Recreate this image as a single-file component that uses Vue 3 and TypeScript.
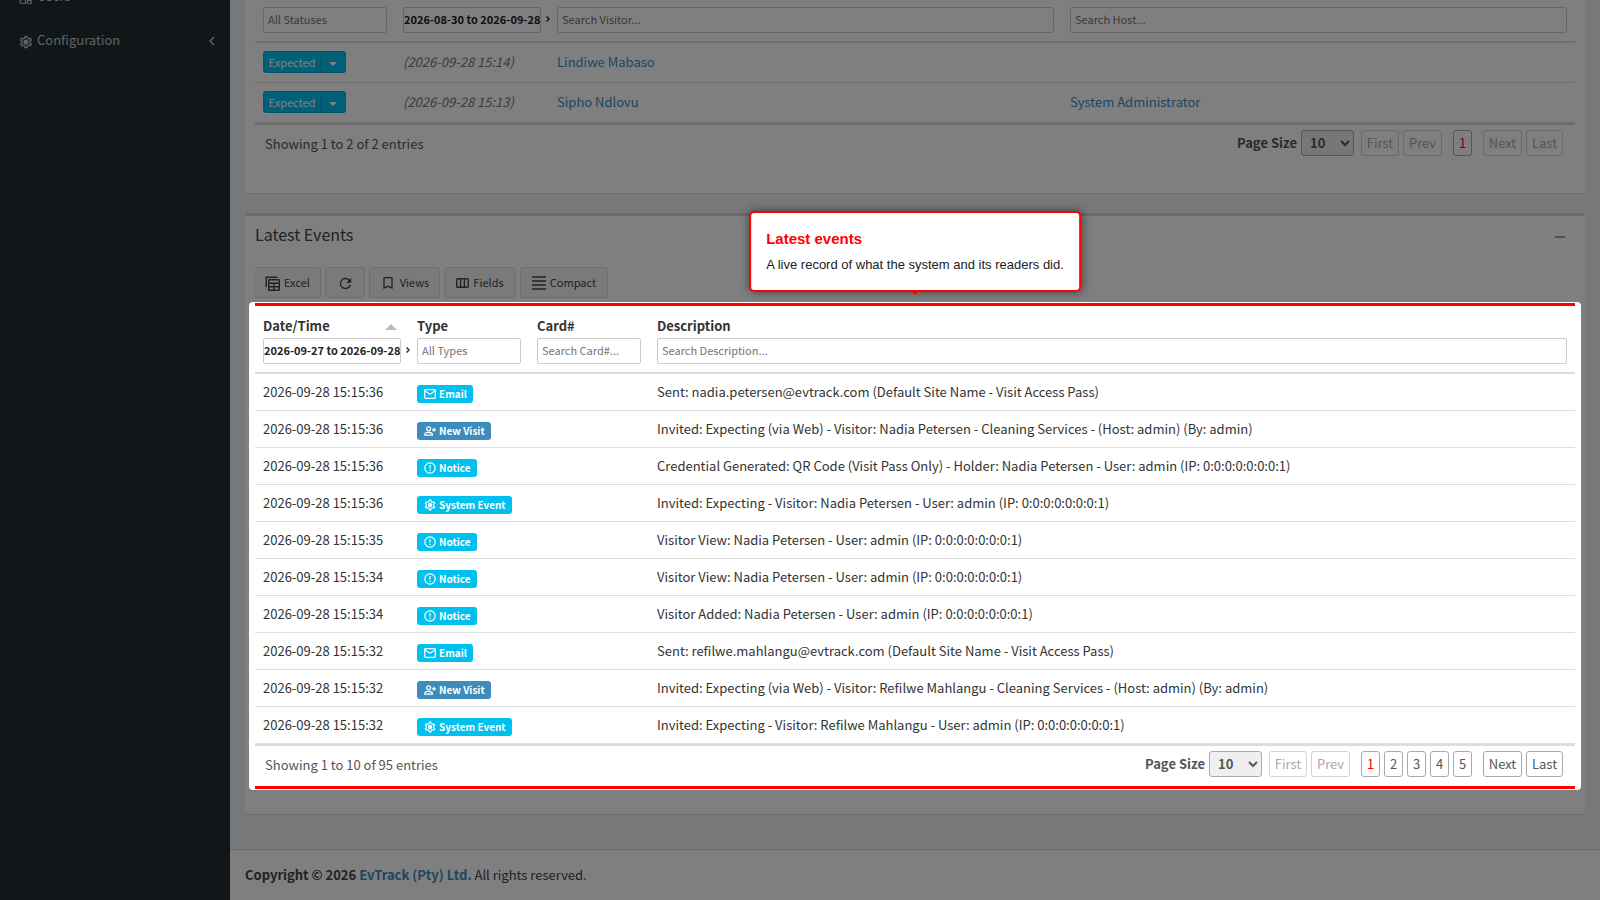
<script setup lang="ts">
type EventKind = 'email' | 'visit' | 'notice' | 'system'

interface LogEvent {
  time: string
  kind: EventKind
  text: string
}

const kindLabel: Record<EventKind, string> = {
  email: 'Email',
  visit: 'New Visit',
  notice: 'Notice',
  system: 'System Event',
}

const visits = [
  { status: 'Expected', date: '(2026-09-28 15:14)', visitor: 'Lindiwe Mabaso', host: '' },
  { status: 'Expected', date: '(2026-09-28 15:13)', visitor: 'Sipho Ndlovu', host: 'System Administrator' },
]

const events: LogEvent[] = [
  { time: '2026-09-28 15:15:36', kind: 'email', text: 'Sent: nadia.petersen@evtrack.com (Default Site Name - Visit Access Pass)' },
  { time: '2026-09-28 15:15:36', kind: 'visit', text: 'Invited: Expecting (via Web) - Visitor: Nadia Petersen - Cleaning Services - (Host: admin) (By: admin)' },
  { time: '2026-09-28 15:15:36', kind: 'notice', text: 'Credential Generated: QR Code (Visit Pass Only) - Holder: Nadia Petersen - User: admin (IP: 0:0:0:0:0:0:0:1)' },
  { time: '2026-09-28 15:15:36', kind: 'system', text: 'Invited: Expecting - Visitor: Nadia Petersen - User: admin (IP: 0:0:0:0:0:0:0:1)' },
  { time: '2026-09-28 15:15:35', kind: 'notice', text: 'Visitor View: Nadia Petersen - User: admin (IP: 0:0:0:0:0:0:0:1)' },
  { time: '2026-09-28 15:15:34', kind: 'notice', text: 'Visitor View: Nadia Petersen - User: admin (IP: 0:0:0:0:0:0:0:1)' },
  { time: '2026-09-28 15:15:34', kind: 'notice', text: 'Visitor Added: Nadia Petersen - User: admin (IP: 0:0:0:0:0:0:0:1)' },
  { time: '2026-09-28 15:15:32', kind: 'email', text: 'Sent: refilwe.mahlangu@evtrack.com (Default Site Name - Visit Access Pass)' },
  { time: '2026-09-28 15:15:32', kind: 'visit', text: 'Invited: Expecting (via Web) - Visitor: Refilwe Mahlangu - Cleaning Services - (Host: admin) (By: admin)' },
  { time: '2026-09-28 15:15:32', kind: 'system', text: 'Invited: Expecting - Visitor: Refilwe Mahlangu - User: admin (IP: 0:0:0:0:0:0:0:1)' },
]

const cog =
  'M12,8A4,4 0 0,1 16,12A4,4 0 0,1 12,16A4,4 0 0,1 8,12A4,4 0 0,1 12,8M10,22C9.75,22 9.54,21.82 9.5,21.58L9.13,18.93C8.5,18.68 7.96,18.34 7.44,17.94L4.95,18.95C4.73,19.03 4.46,18.95 4.34,18.73L2.34,15.27C2.21,15.05 2.27,14.78 2.46,14.63L4.57,12.97L4.5,12L4.57,11L2.46,9.37C2.27,9.22 2.21,8.95 2.34,8.73L4.34,5.27C4.46,5.05 4.73,4.96 4.95,5.05L7.44,6.05C7.96,5.66 8.5,5.32 9.13,5.07L9.5,2.42C9.54,2.18 9.75,2 10,2H14C14.25,2 14.46,2.18 14.5,2.42L14.87,5.07C15.5,5.32 16.04,5.66 16.56,6.05L19.05,5.05C19.27,4.96 19.54,5.05 19.66,5.27L21.66,8.73C21.79,8.95 21.73,9.22 21.54,9.37L19.43,11L19.5,12L19.43,13L21.54,14.63C21.73,14.78 21.79,15.05 21.66,15.27L19.66,18.73C19.54,18.95 19.27,19.04 19.05,18.95L16.56,17.95C16.04,18.34 15.5,18.68 14.87,18.93L14.5,21.58C14.46,21.82 14.25,22 14,22H10M11.25,4L10.88,6.61C9.68,6.86 8.62,7.5 7.85,8.39L5.44,7.35L4.69,8.65L6.8,10.2C6.4,11.37 6.4,12.64 6.8,13.8L4.68,15.36L5.43,16.66L7.86,15.62C8.63,16.5 9.68,17.14 10.87,17.38L11.24,20H12.76L13.13,17.39C14.32,17.14 15.37,16.5 16.14,15.62L18.57,16.66L19.32,15.36L17.2,13.81C17.6,12.64 17.6,11.37 17.2,10.2L19.31,8.65L18.56,7.35L16.15,8.39C15.38,7.5 14.32,6.86 13.12,6.62L12.75,4H11.25Z'
</script>

<template>
  <div class="page">
    <aside class="sidebar">
      <nav>
        <a href="#users" class="nav-item">
          <svg viewBox="0 0 24 24" class="nav-icon" fill="none" stroke="currentColor" stroke-width="2">
            <circle cx="9" cy="7" r="4" />
            <path d="M2 21v-3c0-2 3-4 7-4h2v7H2M14 21v-5h7v5z" />
            <circle cx="17" cy="12" r="3" />
          </svg>
          <span class="nav-text">Users</span>
        </a>
        <a href="#configuration" class="nav-item">
          <svg viewBox="1 1 22 22" class="nav-icon" fill="currentColor"><path :d="cog" /></svg>
          <span class="nav-text">Configuration</span>
          <svg viewBox="0 0 6 10" class="chevron" fill="none" stroke="currentColor" stroke-width="1.5"><path d="M5 1 1 5l4 4" /></svg>
        </a>
      </nav>
    </aside>

    <div class="main">
      <main class="content">
        <section class="card card-visits">
          <table class="grid visits">
            <colgroup><col class="w-status" /><col class="w-date" /><col /><col /></colgroup>
            <thead>
              <tr>
                <th><input type="text" class="filter" placeholder="All Statuses" aria-label="Status" /></th>
                <th>
                  <div class="range">
                    <input type="text" class="filter filter-date" value="2026-08-30 to 2026-09-28" aria-label="Expected date" />
                    <svg viewBox="0 0 4 6" class="next" fill="none" stroke="currentColor" stroke-width="1.5"><path d="M.5.5 3 3 .5 5.5" /></svg>
                  </div>
                </th>
                <th><input type="text" class="filter" placeholder="Search Visitor..." aria-label="Visitor" /></th>
                <th><input type="text" class="filter" placeholder="Search Host..." aria-label="Host" /></th>
              </tr>
            </thead>
            <tbody>
              <tr v-for="v in visits" :key="v.visitor">
                <td>
                  <div class="split">
                    <button type="button" class="split-main">{{ v.status }}</button>
                    <button type="button" class="split-caret" aria-label="Change status"><span class="caret"></span></button>
                  </div>
                </td>
                <td class="pending">{{ v.date }}</td>
                <td><a href="#visitor">{{ v.visitor }}</a></td>
                <td><a v-if="v.host" href="#host">{{ v.host }}</a></td>
              </tr>
            </tbody>
          </table>
          <div class="pager">
            <span class="summary">Showing 1 to 2 of 2 entries</span>
            <label for="size-visits" class="size-label">Page Size</label>
            <select id="size-visits" class="size"><option>10</option></select>
            <button type="button" class="pg pg-first" disabled>First</button>
            <button type="button" class="pg pg-prev" disabled>Prev</button>
            <span class="pages"><button type="button" class="pg pg-num active">1</button></span>
            <button type="button" class="pg pg-next" disabled>Next</button>
            <button type="button" class="pg pg-last" disabled>Last</button>
          </div>
        </section>

        <section class="card card-events">
          <header class="card-head">
            <h3>Latest Events</h3>
            <button type="button" class="collapse" aria-label="Collapse"><span class="minus"></span></button>
          </header>

          <div class="toolbar">
            <button type="button" class="tool tool-excel">
              <svg viewBox="0 0 15 15" width="15" height="15" fill="none" stroke="currentColor" stroke-width="1.4">
                <path d="M1.2 11V1.2H12.5" />
                <rect x="3.7" y="3.7" width="10.6" height="10.6" rx=".6" />
                <path d="M3.7 7.2h10.600M3.7 10.800h10.600M9 7.200v7" />
              </svg>
              Excel
            </button>
            <button type="button" class="tool tool-refresh" aria-label="Refresh">
              <svg viewBox="0 0 24 24" width="17" height="17" fill="currentColor"><path d="M17.650 6.350A7.960 7.960 0 0 0 12 4a8 8 0 1 0 7.730 10h-2.080A6 6 0 1 1 12 6c1.660 0 3.140.690 4.220 1.780L13 11h7V4z" /></svg>
            </button>
            <button type="button" class="tool tool-views">
              <svg viewBox="0 0 24 24" width="16" height="16" fill="currentColor"><path d="M17 18l-5-2.180L7 18V5h10m0-2H7a2 2 0 0 0-2 2v16l7-3 7 3V5a2 2 0 0 0-2-2z" /></svg>
              Views
            </button>
            <button type="button" class="tool tool-fields">
              <svg viewBox="0 0 13 10" width="13" height="10" fill="none" stroke="currentColor" stroke-width="1.400"><rect x=".7" y=".7" width="11.600" height="8.600" rx="1" /><path d="M4.600 1v8M8.400 1v8" /></svg>
              Fields
            </button>
            <button type="button" class="tool tool-compact">
              <svg viewBox="0 0 14 14" width="14" height="14" fill="none" stroke="currentColor" stroke-width="1.300"><path d="M0 1h14M0 5h14M0 9h14M0 13h14" /></svg>
              Compact
            </button>
          </div>

          <div class="focus">
            <div class="spotlight"></div>
            <div class="tip" role="tooltip">
              <h4>Latest events</h4>
              <p>A live record of what the system and its readers did.</p>
            </div>

            <table class="grid events">
              <colgroup><col class="w-date" /><col class="w-type" /><col class="w-type" /><col /></colgroup>
              <thead>
                <tr>
                  <th>
                    <span class="th-label th-sort">Date/Time<span class="sort"></span></span>
                    <div class="range">
                      <input type="text" class="filter filter-date" value="2026-09-27 to 2026-09-28" aria-label="Date/Time" />
                      <svg viewBox="0 0 4 6" class="next" fill="none" stroke="currentColor" stroke-width="1.5"><path d="M.5.5 3 3 .5 5.5" /></svg>
                    </div>
                  </th>
                  <th><label for="f-type" class="th-label">Type</label><input id="f-type" type="text" class="filter" placeholder="All Types" /></th>
                  <th><label for="f-card" class="th-label">Card#</label><input id="f-card" type="text" class="filter" placeholder="Search Card#..." /></th>
                  <th><label for="f-desc" class="th-label">Description</label><input id="f-desc" type="text" class="filter" placeholder="Search Description..." /></th>
                </tr>
              </thead>
              <tbody>
                <tr v-for="(e, i) in events" :key="i">
                  <td>{{ e.time }}</td>
                  <td>
                    <span class="badge" :class="'badge-' + e.kind">
                      <svg v-if="e.kind === 'email'" viewBox="0 0 12 12" class="badge-icon" fill="none" stroke="currentColor" stroke-width="1.2"><rect x=".7" y="1.700" width="10.600" height="8.600" rx=".8" /><path d="M1 3l5 3.200L11 3" /></svg>
                      <svg v-else-if="e.kind === 'visit'" viewBox="0 0 12 12" class="badge-icon" fill="none" stroke="currentColor" stroke-width="1.2"><circle cx="4.600" cy="3.800" r="2" /><path d="M.8 10.200V9.400C.8 8 3 7.400 4.600 7.400S8.400 8 8.400 9.400v.8zM8 4.800h4M10 2.800v4" /></svg>
                      <svg v-else-if="e.kind === 'notice'" viewBox="0 0 12 12" class="badge-icon" fill="none" stroke="currentColor" stroke-width="1.2"><circle cx="6" cy="6" r="5.200" /><path d="M6 3v3.600M6 7.800V9" /></svg>
                      <svg v-else viewBox="1 1 22 22" class="badge-icon" fill="currentColor"><path :d="cog" /></svg>
                      {{ kindLabel[e.kind] }}
                    </span>
                  </td>
                  <td></td>
                  <td>{{ e.text }}</td>
                </tr>
              </tbody>
            </table>
            <div class="pager">
              <span class="summary">Showing 1 to 10 of 95 entries</span>
              <label for="size-events" class="size-label">Page Size</label>
              <select id="size-events" class="size"><option>10</option></select>
              <button type="button" class="pg pg-first" disabled>First</button>
              <button type="button" class="pg pg-prev" disabled>Prev</button>
              <span class="pages">
                <button v-for="n in 5" :key="n" type="button" class="pg pg-num" :class="{ active: n === 1 }">{{ n }}</button>
              </span>
              <button type="button" class="pg pg-next">Next</button>
              <button type="button" class="pg pg-last">Last</button>
            </div>
          </div>
        </section>
      </main>

      <footer class="footer">
        <strong>Copyright © 2026 <a href="#evtrack">EvTrack (Pty) Ltd.</a></strong> All rights reserved.
      </footer>
    </div>
  </div>
</template>

<style>
body {
  margin: 0;
  background: #ecf0f5;
}
</style>

<style scoped>
.page {
  position: relative;
  display: flex;
  min-height: 100vh;
  overflow: hidden;
  background: #ecf0f5;
  color: #333;
  font-family: "Source Sans Pro", "Noto Sans CJK SC", "Noto Sans", sans-serif;
  font-size: 13px;
  line-height: 20px;
}
.page *,
.page *::before,
.page *::after {
  box-sizing: border-box;
}
button,
input,
select {
  font-family: inherit;
  margin: 0;
}
a {
  color: #3c8dbc;
  text-decoration: none;
}

.sidebar {
  flex: 0 0 230px;
  background: #222d32;
}
.sidebar nav {
  margin-top: -25px;
}
.nav-item {
  display: flex;
  align-items: center;
  height: 44px;
  padding: 0 15px 0 19px;
  color: #b8c7ce;
}
.nav-icon {
  width: 14px;
  height: 14px;
  margin: 2px 4px 0 0;
}
.nav-text {
  flex: 1;
  padding-bottom: 2px;
}
.chevron {
  width: 6px;
  height: 10px;
}

.main {
  flex: 1;
  min-width: 0;
  display: flex;
  flex-direction: column;
}
.content {
  flex: 1;
  padding: 0 15px;
}
.card {
  background: #fff;
  border-radius: 3px;
  box-shadow: 0 1px 1px rgba(0, 0, 0, 0.1);
  padding: 0 10px;
}
.card-visits {
  padding-top: 7px;
  padding-bottom: 32px;
  margin-bottom: 20px;
}
.card-events {
  border-top: 3px solid #d2d6de;
  padding-bottom: 25px;
  margin-bottom: 35px;
}
.card-head {
  display: flex;
  justify-content: space-between;
  align-items: center;
  height: 41px;
}
.card-head h3 {
  margin: 0;
  padding-bottom: 6px;
  font-size: 16px;
  font-weight: 400;
  color: #444;
}
.collapse {
  padding: 10px;
  border: 0;
  background: none;
}
.minus {
  display: block;
  width: 10px;
  height: 2px;
  background: #97a0b3;
}

.toolbar {
  display: flex;
  gap: 4px;
  padding: 10px 0 5px;
}
.tool {
  display: flex;
  align-items: center;
  justify-content: center;
  gap: 4px;
  height: 31px;
  padding: 0 0 1px;
  background: #f4f4f4;
  border: 1px solid #ddd;
  border-radius: 3px;
  color: #444;
  font-size: 11px;
}
.tool svg {
  margin-top: 2px;
}
.tool-excel {
  width: 66px;
  border-left: 0;
  border-radius: 0 3px 3px 0;
}
.tool-refresh {
  width: 40px;
}
.tool-views {
  width: 71px;
}
.tool-fields {
  width: 72px;
}
.tool-compact {
  width: 88px;
}

.focus {
  position: relative;
  border-top: 3px solid #f00;
  border-bottom: 3px solid #f00;
}
.spotlight {
  position: absolute;
  inset: -4px -6px;
  z-index: 5;
  border-radius: 4px;
  box-shadow: 0 0 0 3000px rgba(0, 0, 0, 0.5);
  pointer-events: none;
}
.tip {
  position: absolute;
  z-index: 6;
  left: 50%;
  bottom: calc(100% + 14px);
  transform: translateX(-50%);
  padding: 16px 15px 15px;
  background: #fff;
  border: 2px solid #f00;
  border-radius: 5px;
  box-shadow: 0 0 10px rgba(0, 0, 0, 0.5);
  color: #222;
  font-family: "Liberation Sans", Arial, sans-serif;
  font-size: 13px;
  white-space: nowrap;
}
.tip::after {
  content: "";
  position: absolute;
  left: 50%;
  top: 100%;
  margin: 1px 0 0 -4px;
  border: 4px solid transparent;
  border-top-color: #f00;
}
.tip h4 {
  margin: 0 0 6px;
  color: #f00;
  font-size: 15px;
  line-height: 20px;
}
.tip p {
  margin: 0;
  line-height: 20px;
}

.grid {
  width: 100%;
  border-collapse: separate;
  border-spacing: 0;
  table-layout: fixed;
}
.w-status {
  width: 140px;
}
.w-date {
  width: 154px;
}
.w-type {
  width: 120px;
}
.grid th {
  padding: 0 8px 8px;
  border-bottom: 2px solid #ddd;
  text-align: left;
  font-weight: 700;
}
.grid td {
  padding: 0 8px;
  border-bottom: 1px solid #ddd;
}
.visits td {
  height: 40px;
  padding-top: 8px;
  line-height: 22px;
  vertical-align: top;
}
.events td {
  height: 37px;
  white-space: nowrap;
}
.grid tbody tr:last-child td {
  border-bottom-width: 3px;
}
.visits tbody tr:last-child td {
  height: 42px;
}
.events tbody tr:last-child td {
  height: 39px;
}
.events thead th {
  padding-top: 10px;
}
.th-label {
  display: flex;
  align-items: center;
  height: 22px;
  padding-bottom: 2px;
}
.th-sort {
  justify-content: space-between;
  padding-right: 4px;
}
.sort {
  margin-top: 2px;
  border: 6px solid transparent;
  border-top: 0;
  border-bottom-color: #bbb;
}
.filter {
  display: block;
  width: 100%;
  height: 26px;
  padding: 0 4px 2px;
  border: 1px solid #ccc;
  border-radius: 2px;
  background: #fff;
  color: #222;
  font-size: 11px;
}
.filter::placeholder {
  color: #757575;
  opacity: 1;
}
.range {
  display: flex;
  align-items: center;
  gap: 5px;
}
.filter-date {
  flex: 0 0 100%;
  padding: 0 0 2px;
  font-weight: 700;
  text-align: center;
}
.next {
  flex: none;
  width: 4px;
  height: 6px;
  margin-bottom: 2px;
}
.pending {
  color: #777;
  font-style: italic;
}

.split {
  display: flex;
}
.split button {
  height: 22px;
  padding: 0 0 1px;
  background: #00c0ef;
  border: 1px solid #00acd6;
  color: #fff;
  font-size: 11px;
}
.split-main {
  width: 58px;
  border-radius: 3px 0 0 3px;
}
.split .split-caret {
  display: flex;
  align-items: center;
  justify-content: center;
  width: 25px;
  border-left: 0;
  border-radius: 0 3px 3px 0;
}
.caret {
  margin-top: 4px;
  border: 4px solid transparent;
  border-top-color: #fff;
  border-bottom: 0;
}

.badge {
  display: inline-flex;
  align-items: center;
  gap: 3px;
  height: 18px;
  margin-top: 3px;
  padding: 0 6px 0 7px;
  border-radius: 3px;
  background: #00c0ef;
  color: #fff;
  font-size: 10px;
  font-weight: 700;
  line-height: 18px;
  vertical-align: middle;
}
.badge-visit {
  background: #3c8dbc;
}
.badge-icon {
  width: 12px;
  height: 12px;
}

.pager {
  display: flex;
  align-items: center;
  gap: 4px;
  height: 40px;
  padding: 0 12px 4px 10px;
  color: #555;
}
.card-visits .pager {
  height: 36px;
  padding-bottom: 0;
}
.summary {
  flex: 1;
  padding-top: 2px;
}
.size-label {
  font-weight: 700;
}
.size {
  width: 53px;
  height: 26px;
  margin-right: 3px;
  padding: 0 4px 1px;
  border: 1px solid #aaa;
  border-radius: 3px;
  background: #efefef;
  color: #555;
  font-size: 13px;
  font-weight: 700;
}
.pages {
  display: flex;
  gap: 4px;
  margin: 0 7px;
}
.pg {
  height: 26px;
  padding: 0 0 2px;
  border: 1px solid #aaa;
  border-radius: 3px;
  background: #fff;
  color: #555;
  font-size: 13px;
}
.pg:disabled {
  border-color: #d4d4d4;
  color: #aaa;
}
.pg-first {
  width: 38px;
}
.pg-prev,
.pg-next {
  width: 39px;
}
.pg-num {
  width: 19px;
}
.pg-last {
  width: 37px;
}
.pg.active {
  color: #f00;
}

.footer {
  padding: 15px;
  background: #fff;
  border-top: 1px solid #d2d6de;
  color: #444;
}
</style>
